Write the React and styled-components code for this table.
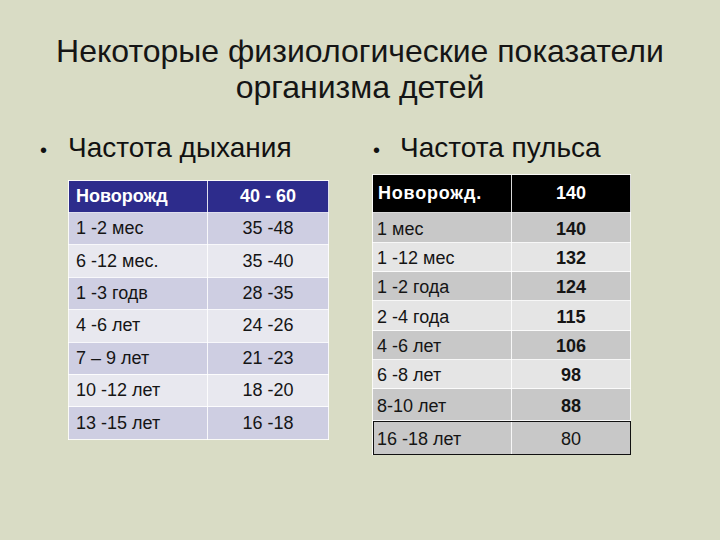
import styled, { createGlobalStyle } from 'styled-components';

/* страница */
const GlobalStyle = createGlobalStyle`
    html, body {
        margin: 0;
        padding: 0;
        background: #d9dcc5;
    }
    body {
        font-family: "Liberation Sans", Arial, sans-serif;
        color: #111;
    }
`;

const Slide = styled.div`
    width: 720px;
    height: 540px;
    box-sizing: border-box;
    padding-top: 33px;
    background: #d9dcc5;
    overflow: hidden;
`;

const Title = styled.h1`
    margin: 0;
    font-weight: normal;
    font-size: 32px;
    line-height: 36px;
    text-align: center;
    color: #151515;
`;

const Columns = styled.div`
    display: grid;
    grid-template-columns: 330px 360px;
    padding-left: 30px;
    margin-top: 27px;
`;

const Column = styled.div`
    display: flex;
    flex-direction: column;
`;

const Heading = styled.div`
    display: flex;
    align-items: baseline;
    font-size: 28px;
    line-height: 32px;
    padding-left: ${p => p.$indent}px;
    color: #111;

    &::before {
        content: '•';
        font-size: 20px;
        width: ${p => p.$bulletGap}px;
        flex-shrink: 0;
    }
`;

const Table = styled.table`
    border-collapse: collapse;
    margin-top: ${p => p.$top}px;
    margin-left: ${p => p.$left}px;
    width: ${p => p.$width}px;
    font-size: 18px;
    table-layout: fixed;
`;

const Row = styled.tr`
    height: ${p => p.$h}px;
    background: ${p => p.$bg};
    outline: ${p => (p.$framed ? '1.5px solid #111' : 'none')};
    outline-offset: -1px;
`;

const Cell = styled.td`
    border: 1.5px solid rgba(255, 255, 255, 0.85);
    padding: ${p => p.$drop || 0}px 0 0 ${p => (p.$center ? 0 : p.$pad ?? 7)}px;
    text-align: ${p => (p.$center ? 'center' : 'left')};
    font-weight: ${p => (p.$bold ? 'bold' : 'normal')};
    color: ${p => p.$color || '#151515'};
    letter-spacing: ${p => p.$spacing || 0}px;
    white-space: nowrap;
`;

const breathing = [
    ['1 -2 мес', '35 -48'],
    ['6 -12 мес.', '35 -40'],
    ['1 -3 годв', '28 -35'],
    ['4 -6 лет', '24 -26'],
    ['7 – 9 лет', '21 -23'],
    ['10 -12 лет', '18 -20'],
    ['13 -15 лет', '16 -18'],
];

const pulse = [
    ['1 мес', '140', true, 30],
    ['1 -12 мес', '132', true, 29],
    ['1 -2 года', '124', true, 29],
    ['2 -4 года', '115', true, 30],
    ['4 -6 лет', '106', true, 29],
    ['6 -8 лет', '98', true, 29],
    ['8-10 лет', '88', true, 32],
];

function App() {
    return (
        <>
            <GlobalStyle />
            <Slide>
                <Title>
                    Некоторые физиологические показатели
                    <br />
                    организма детей
                </Title>
                <Columns>
                    <Column>
                        <Heading $indent={10} $bulletGap={28}>Частота дыхания</Heading>
                        <Table $top={14} $left={38} $width={260}>
                            <colgroup>
                                <col style={{ width: 139 }} />
                                <col style={{ width: 121 }} />
                            </colgroup>
                            <tbody>
                                <Row $h={32} $bg="#2d2c8c">
                                    <Cell $bold $color="#fff">Новорожд</Cell>
                                    <Cell $bold $center $color="#fff">40 - 60</Cell>
                                </Row>
                                {breathing.map(([age, value], i) => (
                                    <Row key={age} $h={32.4} $bg={i % 2 === 0 ? '#cecee2' : '#e8e8ef'}>
                                        <Cell>{age}</Cell>
                                        <Cell $center>{value}</Cell>
                                    </Row>
                                ))}
                            </tbody>
                        </Table>
                    </Column>
                    <Column>
                        <Heading $indent={13} $bulletGap={27}>Частота пульса</Heading>
                        <Table $top={8} $left={12} $width={258}>
                            <colgroup>
                                <col style={{ width: 139 }} />
                                <col style={{ width: 119 }} />
                            </colgroup>
                            <tbody>
                                <Row $h={38} $bg="#000">
                                    <Cell $bold $color="#fff" $spacing={0.8} $pad={5}>Новорожд.</Cell>
                                    <Cell $bold $center $color="#fff">140</Cell>
                                </Row>
                                {pulse.map(([age, value, bold, h], i) => (
                                    <Row key={age} $h={h} $bg={i % 2 === 0 ? '#c8c8c8' : '#e5e5e5'}>
                                        <Cell $pad={4} $drop={3}>{age}</Cell>
                                        <Cell $center $bold={bold} $drop={3}>{value}</Cell>
                                    </Row>
                                ))}
                                <Row $h={34} $bg="#c8c8c8" $framed>
                                    <Cell $pad={4} $drop={3}>16 -18 лет</Cell>
                                    <Cell $center $drop={3}>80</Cell>
                                </Row>
                            </tbody>
                        </Table>
                    </Column>
                </Columns>
            </Slide>
        </>
    );
}

export default App;
